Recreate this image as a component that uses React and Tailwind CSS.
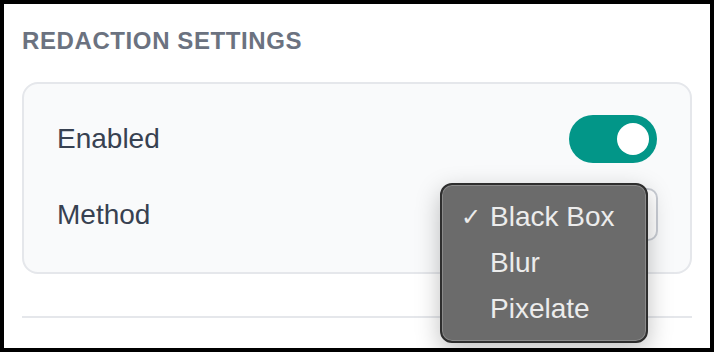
import { useState } from "react";

function Toggle({ on, onChange }) {
  return (
    <button
      type="button"
      onClick={() => onChange(!on)}
      className={`flex h-[48px] w-[88px] items-center rounded-full px-[8px] ${on ? "justify-end bg-[#029688]" : "justify-start bg-gray-300"}`}
    >
      <span className="h-[32px] w-[32px] rounded-full bg-white" />
    </button>
  );
}

export default function App() {
  const [enabled, setEnabled] = useState(true);
  const [method, setMethod] = useState("Black Box");
  const options = ["Black Box", "Blur", "Pixelate"];

  return (
    <div className="h-[352px] w-[714px] border-4 border-black bg-white px-[18px] pt-[21px] font-['Liberation_Sans',Arial,sans-serif]">
      <h2 className="text-[24px] font-bold uppercase leading-[32px] tracking-[0.6px] text-[#6b7280]">Redaction Settings</h2>

      <div className="mt-[25px] rounded-[16px] border-2 border-[#e5e7eb] bg-[#f9fafb] px-[33px] py-[31px]">
        <div className="flex h-[48px] items-center justify-between">
          <span className="text-[28px] text-[#374151]">Enabled</span>
          <Toggle on={enabled} onChange={setEnabled} />
        </div>

        <div className="mt-[25px] flex h-[53px] items-center justify-between">
          <span className="text-[28px] text-[#374151]">Method</span>
          <div className="relative -mr-[1px]">
            {/* closed select, mostly covered by the open menu */}
            <div className="flex h-[53px] w-[210px] items-center rounded-[10px] border-2 border-[#c9cdd4] bg-white px-4 text-[26px] text-[#374151]">
              <span className="invisible">{method}</span>
            </div>

            {/* native-style open menu */}
            <div className="absolute -left-[8px] -top-[5px] z-10 w-[208px] rounded-[12px] border-2 border-[#2e2e2e] bg-[#6b6b6b] py-[9px] shadow-[0_8px_24px_rgba(0,0,0,0.25)] ring-1 ring-inset ring-[#8a8a8a]">
              {options.map((o) => (
                <button
                  key={o}
                  type="button"
                  onClick={() => setMethod(o)}
                  className="flex h-[46px] w-full items-center text-left text-[28px] leading-none text-[#ececec]"
                >
                  <span className="w-[48px] pl-[19px] font-['DejaVu_Sans',sans-serif] text-[24px]">{method === o ? "✓" : ""}</span>
                  <span>{o}</span>
                </button>
              ))}
            </div>
          </div>
        </div>
      </div>

      <div className="mt-[42px] h-[2px] bg-[#e5e7eb]" />
    </div>
  );
}
